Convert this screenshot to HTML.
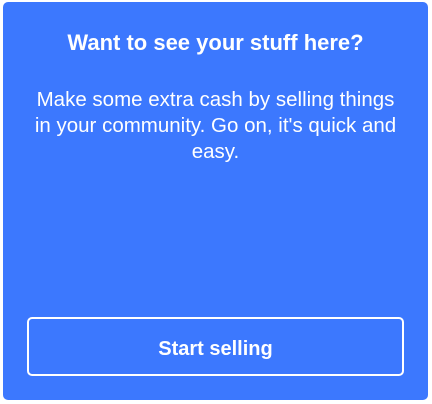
<!DOCTYPE html>
<html><head><style>
html,body{margin:0;padding:0;background:#fff;width:432px;height:404px;overflow:hidden}
.card{position:absolute;left:3px;top:2px;width:425px;height:398px;background:#3c78fe;border-radius:5px;font-family:"Liberation Sans",Arial,sans-serif;color:#fff;text-align:center}
h1{position:absolute;top:27px;left:0;right:0;margin:0;font-size:22px;font-weight:bold;line-height:28px}
p{position:absolute;top:85px;left:0;right:0;margin:0;font-size:20.5px;line-height:26px;white-space:nowrap}
.btn{position:absolute;left:24px;top:315px;width:373px;height:55px;border:2.5px solid #fff;border-radius:5px;font-size:20px;font-weight:bold;line-height:60px}
</style></head><body>
<div class="card">
<h1>Want to see your stuff here?</h1>
<p>Make some extra cash by selling things<br>in your community. Go on, it's quick and<br>easy.</p>
<div class="btn">Start selling</div>
</div>
</body></html>
